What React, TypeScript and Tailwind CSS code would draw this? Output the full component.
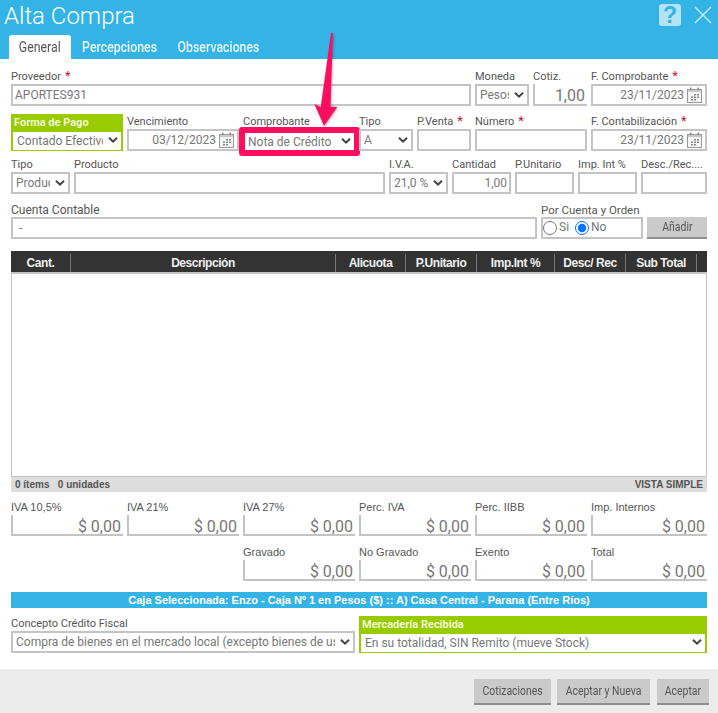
import React from "react";

const roboto = "font-['Roboto',sans-serif]";
const arial = "font-['Liberation_Sans',Arial,sans-serif]";

function Star() {
  return <span className="text-[#c8103f] ml-[4px] text-[13px] leading-none">*</span>;
}

function Label({ text, req, cls = "" }: { text: string; req?: boolean; cls?: string }) {
  return (
    <div className={`h-[15px] leading-[16px] text-[11px] text-[#555] whitespace-nowrap ${roboto} ${cls}`}>
      {text}
      {req && <Star />}
    </div>
  );
}

const box = "block h-[22px] w-full border-2 border-[#c4c4c4] bg-white text-[#777] outline-none";

function Input({ value = "", cls = "" }: { value?: string; cls?: string }) {
  return <input readOnly value={value} className={`${box} px-[2px] text-[12px] ${roboto} ${cls}`} />;
}

function Chevron({ cls = "right-[5px]" }: { cls?: string }) {
  return (
    <svg className={`pointer-events-none absolute top-1/2 -translate-y-1/2 ${cls}`} width="10" height="7" viewBox="0 0 10 7" fill="none" stroke="#444" strokeWidth="2">
      <path d="M1 1.2 L5 5.2 L9 1.2" />
    </svg>
  );
}

function Select({ value, cls = "" }: { value: string; cls?: string }) {
  return (
    <div className="relative">
      <select defaultValue={value} className={`${box} appearance-none pl-[3px] pr-[18px] text-[12px] ${roboto} ${cls}`}>
        <option>{value}</option>
      </select>
      <Chevron />
    </div>
  );
}

function Calendar() {
  return (
    <svg width="15" height="16" viewBox="0 0 15 16" className="shrink-0">
      <rect x="0.5" y="2.5" width="14" height="13" fill="#f4f4f4" stroke="#9a9a9a" />
      <rect x="3" y="0.5" width="1.5" height="3" fill="#888" />
      <rect x="10.5" y="0.5" width="1.5" height="3" fill="#888" />
      <rect x="1" y="3" width="13" height="2" fill="#c9c9c9" />
      <g fill="#8a8a8a">
        <rect x="7" y="7" width="2" height="1.5" />
        <rect x="10" y="7" width="2" height="1.5" />
        <rect x="4" y="9.5" width="2" height="1.5" />
        <rect x="7" y="9.5" width="2" height="1.5" />
        <rect x="10" y="9.5" width="2" height="1.5" />
        <rect x="4" y="12" width="2" height="1.5" />
        <rect x="7" y="12" width="2" height="1.5" />
      </g>
    </svg>
  );
}

function DateField({ value }: { value: string }) {
  return (
    <div className={`${box} flex items-center justify-end gap-[3px] pr-[3px] text-[12px] ${roboto}`}>
      <span>{value}</span>
      <Calendar />
    </div>
  );
}

function Money({ label }: { label: string }) {
  return (
    <div>
      <div className={`h-[15px] leading-[14px] text-[11px] text-[#555] ${arial}`}>{label}</div>
      <div className={`h-[21px] border-l-2 border-b-2 border-[#c4c4c4] text-right pr-[2px] text-[#777] text-[16px] leading-[23px] ${roboto}`}>
        $ 0,00
      </div>
    </div>
  );
}

function GreenBox({ title, value }: { title: string; value: string }) {
  return (
    <div className="h-[37px] bg-[#99cc00] px-[2px] pb-[1px]">
      <div className={`h-[18px] leading-[17px] pl-[1px] text-[11px] font-bold text-[#f1f8d8] whitespace-nowrap ${roboto}`}>{title}</div>
      <div className="relative h-[18px] bg-white">
        <select defaultValue={value} className={`block h-[16px] w-full appearance-none bg-white text-[#777] text-[12px] pl-[4px] pr-[18px] outline-none ${roboto}`}>
          <option>{value}</option>
        </select>
        <Chevron cls="right-[3px] -mt-[1px]" />
      </div>
    </div>
  );
}

function Btn({ children, cls }: { children: React.ReactNode; cls: string }) {
  return (
    <button className={`h-[26px] bg-[#cacaca] border-b-2 border-[#8f8f8f] text-[#555] text-[12px] ${roboto} ${cls}`}>
      <span className="inline-block scale-x-[0.87] whitespace-nowrap">{children}</span>
    </button>
  );
}

const cols = [
  ["Cant.", "w-[60px]"],
  ["Descripción", "w-[265px]"],
  ["Alicuota", "w-[70px]"],
  ["P.Unitario", "w-[71px]"],
  ["Imp.Int %", "w-[78px]"],
  ["Desc/ Rec", "w-[71px]"],
  ["Sub Total", "w-[71px]"],
] as const;

export default function App() {
  return (
    <div className="relative h-[713px] w-[718px] overflow-hidden bg-white">
      {/* Header */}
      <header className="relative h-[59px] bg-[#33b3e6]">
        <div className="flex h-[35px] items-start justify-between">
          <h1 className={`pl-[4px] pt-[1px] text-[24px] leading-[30px] font-light text-white ${roboto}`}>Alta Compra</h1>
          <div className="flex items-center gap-[13px] pr-[6px] pt-[4px]">
            <div className={`flex h-[22px] w-[22px] items-center justify-center rounded-[3px] bg-[#b5e3f6] text-[23px] font-black leading-none text-[#33b3e6] ${arial}`}>?</div>
            <svg width="18" height="18" viewBox="0 0 18 18" fill="none" stroke="#cdeefb" strokeWidth="1.3">
              <path d="M1 1 L17 17 M17 1 L1 17" />
            </svg>
          </div>
        </div>
        <nav className={`flex h-[24px] pl-[9px] text-[14px] font-medium ${roboto}`}>
          <div className="flex w-[62px] items-center justify-center rounded-t-[3px] bg-white text-[#555] font-normal">
            <span className="inline-block scale-x-[0.88]">General</span>
          </div>
          <div className="flex w-[98px] items-center justify-center text-[#e8f7fd]">
            <span className="inline-block scale-x-[0.88]">Percepciones</span>
          </div>
          <div className="flex w-[99px] items-center justify-center text-[#e8f7fd]">
            <span className="inline-block scale-x-[0.88]">Observaciones</span>
          </div>
        </nav>
      </header>

      {/* Form */}
      <main className="px-[11px] pt-[10px]">
        <div className="grid grid-cols-[112px_112px_112px_112px_112px_116px] gap-x-[4px]">
          <div className="col-span-4">
            <Label text="Proveedor" req />
            <Input value="APORTES931" />
          </div>
          <div className="flex gap-[4px]">
            <div className="w-[54px]">
              <Label text="Moneda" />
              <Select value="Pesos" />
            </div>
            <div className="w-[54px]">
              <Label text="Cotiz." />
              <Input value="1,00" cls="text-right !text-[16px] !border-0 !border-l-2 !border-b-2 pt-[3px]" />
            </div>
          </div>
          <div>
            <Label text="F. Comprobante" req />
            <DateField value="23/11/2023" />
          </div>
        </div>

        <div className="mt-[8px] grid grid-cols-[112px_112px_112px_112px_112px_116px] gap-x-[4px]">
          <GreenBox title="Forma de Pago" value="Contado Efectivo" />
          <div>
            <Label text="Vencimiento" />
            <DateField value="03/12/2023" />
          </div>
          <div className="relative">
            <Label text="Comprobante" />
            <div className="relative ml-[2px] mt-[4px] h-[17px] w-[109px] bg-white">
              <select defaultValue="Nota de Crédito" className={`block h-[15px] w-full appearance-none bg-white pl-[3px] pr-[16px] text-[#777] text-[12px] outline-none ${roboto}`}>
                <option>Nota de Crédito</option>
              </select>
              <Chevron cls="right-[3px] -mt-[1px]" />
            </div>
            <div className="pointer-events-none absolute -left-[4px] top-[13px] h-[29px] w-[121px] rounded-[3px] border-[6px] border-[#ff0d5f]" />
          </div>
          <div className="flex gap-[4px]">
            <div className="w-[54px]">
              <Label text="Tipo" />
              <Select value="A" />
            </div>
            <div className="w-[54px]">
              <Label text="P.Venta" req />
              <Input />
            </div>
          </div>
          <div>
            <Label text="Número" req />
            <Input />
          </div>
          <div>
            <Label text="F. Contabilización" req />
            <DateField value="23/11/2023" />
          </div>
        </div>

        <div className="mt-[6px] grid grid-cols-[59px_311px_59px_59px_59px_59px_66px] gap-x-[4px]">
          <div><Label text="Tipo" /><Select value="Producto" /></div>
          <div><Label text="Producto" /><Input /></div>
          <div><Label text="I.V.A." /><Select value="21,0 %" /></div>
          <div><Label text="Cantidad" /><Input value="1,00" cls="text-right" /></div>
          <div><Label text="P.Unitario" /><Input /></div>
          <div><Label text="Imp. Int %" /><Input /></div>
          <div><Label text="Desc./Rec...." /><Input /></div>
        </div>

        <div className="mt-[8px] grid grid-cols-[526px_102px_60px] gap-x-[4px]">
          <div><Label text="Cuenta Contable" cls="!text-[12px]" /><Input value="-" cls="!px-[6px]" /></div>
          <div>
            <Label text="Por Cuenta y Orden" cls="!text-[11.5px]" />
            <div className={`${box} flex items-center text-[12px] ${roboto}`}>
              <input type="radio" name="pco" readOnly className="m-0 h-[14px] w-[14px]" />
              <span className="ml-[2px] mr-[6px] -mt-[2px]">Si</span>
              <input type="radio" name="pco" readOnly defaultChecked className="m-0 h-[14px] w-[14px]" />
              <span className="ml-[2px] -mt-[2px]">No</span>
            </div>
          </div>
          <div className="pt-[15px]">
            <button className={`block h-[22px] w-full bg-[#cacaca] border-b-2 border-[#8f8f8f] text-[#555] text-[12px] ${roboto}`}>
              <span className="inline-block scale-x-[0.87]">Añadir</span>
            </button>
          </div>
        </div>

        {/* Table */}
        <div className="mt-[12px]">
          <div className={`flex h-[21px] items-end bg-[#333] text-[12px] font-bold tracking-[-0.45px] text-[#eee] ${arial}`}>
            {cols.map(([t, w]) => (
              <div key={t} className={`flex h-[18px] items-center justify-center border-r border-[#777] ${w}`}>{t}</div>
            ))}
          </div>
          <div className="h-[204px] border-x border-t-2 border-[#c4c4c4] bg-white" />
          <div className={`flex h-[16px] items-center justify-between border-t border-[#c4c4c4] bg-[#dddddd] pl-[4px] pr-[4px] text-[10px] font-bold text-[#555] ${arial}`}>
            <span>0 ítems&nbsp;&nbsp; 0 unidades</span>
            <span>VISTA SIMPLE</span>
          </div>
        </div>

        {/* Totals */}
        <div className="mt-[8px] grid grid-cols-[112px_112px_112px_112px_112px_116px] gap-x-[4px] gap-y-[9px]">
          <Money label="IVA 10,5%" />
          <Money label="IVA 21%" />
          <Money label="IVA 27%" />
          <Money label="Perc. IVA" />
          <Money label="Perc. IIBB" />
          <Money label="Imp. Internos" />
          <div className="col-span-2" />
          <Money label="Gravado" />
          <Money label="No Gravado" />
          <Money label="Exento" />
          <Money label="Total" />
        </div>

        <div className={`mt-[11px] h-[16px] bg-[#33b3e6] text-center text-[11px] leading-[16px] font-bold text-white ${arial}`}>
          Caja Seleccionada: Enzo - Caja Nº 1 en Pesos ($) :: A) Casa Central - Parana (Entre Ríos)
        </div>

        <div className="mt-[8px] grid grid-cols-[344px_348px] gap-x-[4px]">
          <div>
            <Label text="Concepto Crédito Fiscal" />
            <Select value="Compra de bienes en el mercado local (excepto bienes de uso)" />
          </div>
          <GreenBox title="Mercadería Recibida" value="En su totalidad, SIN Remito (mueve Stock)" />
        </div>
      </main>

      {/* Footer */}
      <footer className="absolute bottom-0 left-0 right-0 flex h-[44px] items-start justify-end gap-[6px] bg-[#ececec] pr-[9px] pt-[10px]">
        <Btn cls="w-[77px]">Cotizaciones</Btn>
        <Btn cls="w-[93px]">Aceptar y Nueva</Btn>
        <Btn cls="w-[52px] ml-[1px]">Aceptar</Btn>
      </footer>

      {/* Arrow annotation */}
      <svg className="pointer-events-none absolute left-[305px] top-[28px]" width="40" height="104" viewBox="0 0 40 104" style={{ filter: "drop-shadow(1px 1px 1px rgba(0,0,0,0.25))" }}>
        <path d="M26 5 L28 5 L25.5 78.5 L32.3 79 L19 98 L9.3 76 L15.7 79 Z" fill="#ff0d5f" />
      </svg>
    </div>
  );
}
